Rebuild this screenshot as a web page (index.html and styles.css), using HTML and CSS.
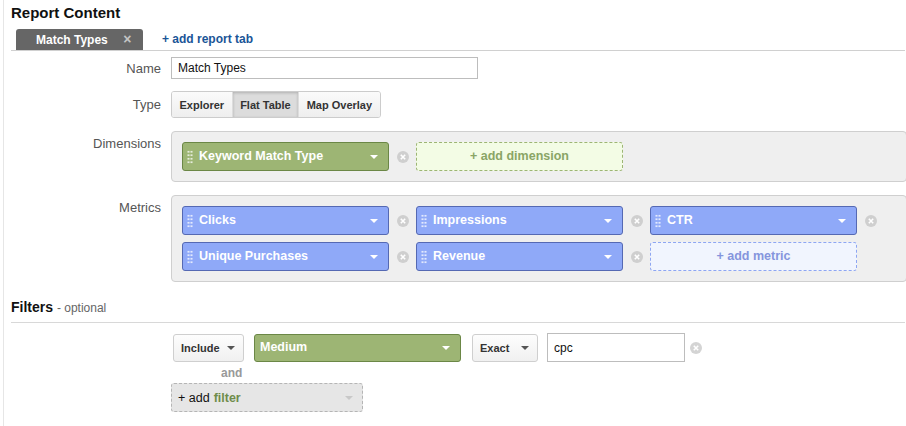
FILE: index.html
```html
<!DOCTYPE html>
<html lang="en">
<head>
    <meta charset="UTF-8">
    <title>Report Content</title>
    <link rel="stylesheet" href="styles.css">
</head>
<body>
    <div class="page">
        <h2 class="section-title">Report Content</h2>

        <div class="tabs">
            <div class="tab">Match Types <span class="tab-close">×</span></div>
            <a class="add-tab" href="#">+ add report tab</a>
        </div>

        <div class="row row-name">
            <label class="row-label">Name</label>
            <input class="text-input name-input" type="text" value="Match Types">
        </div>

        <div class="row row-type">
            <label class="row-label">Type</label>
            <div class="segmented">
                <button class="seg-btn">Explorer</button>
                <button class="seg-btn active">Flat Table</button>
                <button class="seg-btn">Map Overlay</button>
            </div>
        </div>

        <div class="row row-box">
            <label class="row-label top">Dimensions</label>
            <div class="field-box">
                <div class="item-grid">
                    <div class="item">
                        <div class="pill green"><span class="grip"></span><span class="pill-text">Keyword Match Type</span><span class="caret"></span></div>
                        <span class="remove"><svg width="12" height="12" viewBox="0 0 12 12"><circle cx="6" cy="6" r="6" fill="#cfcfcf"/><path d="M3.8 3.8l4.4 4.4M8.2 3.8l-4.4 4.4" stroke="#fff" stroke-width="1.6"/></svg></span>
                    </div>
                    <div class="item">
                        <div class="add-box green-add">+ add dimension</div>
                    </div>
                </div>
            </div>
        </div>

        <div class="row row-box">
            <label class="row-label top">Metrics</label>
            <div class="field-box">
                <div class="item-grid">
                    <div class="item">
                        <div class="pill blue"><span class="grip"></span><span class="pill-text">Clicks</span><span class="caret"></span></div>
                        <span class="remove"><svg width="12" height="12" viewBox="0 0 12 12"><circle cx="6" cy="6" r="6" fill="#cfcfcf"/><path d="M3.8 3.8l4.4 4.4M8.2 3.8l-4.4 4.4" stroke="#fff" stroke-width="1.6"/></svg></span>
                    </div>
                    <div class="item">
                        <div class="pill blue"><span class="grip"></span><span class="pill-text">Impressions</span><span class="caret"></span></div>
                        <span class="remove"><svg width="12" height="12" viewBox="0 0 12 12"><circle cx="6" cy="6" r="6" fill="#cfcfcf"/><path d="M3.8 3.8l4.4 4.4M8.2 3.8l-4.4 4.4" stroke="#fff" stroke-width="1.6"/></svg></span>
                    </div>
                    <div class="item">
                        <div class="pill blue"><span class="grip"></span><span class="pill-text">CTR</span><span class="caret"></span></div>
                        <span class="remove"><svg width="12" height="12" viewBox="0 0 12 12"><circle cx="6" cy="6" r="6" fill="#cfcfcf"/><path d="M3.8 3.8l4.4 4.4M8.2 3.8l-4.4 4.4" stroke="#fff" stroke-width="1.6"/></svg></span>
                    </div>
                    <div class="item">
                        <div class="pill blue"><span class="grip"></span><span class="pill-text">Unique Purchases</span><span class="caret"></span></div>
                        <span class="remove"><svg width="12" height="12" viewBox="0 0 12 12"><circle cx="6" cy="6" r="6" fill="#cfcfcf"/><path d="M3.8 3.8l4.4 4.4M8.2 3.8l-4.4 4.4" stroke="#fff" stroke-width="1.6"/></svg></span>
                    </div>
                    <div class="item">
                        <div class="pill blue"><span class="grip"></span><span class="pill-text">Revenue</span><span class="caret"></span></div>
                        <span class="remove"><svg width="12" height="12" viewBox="0 0 12 12"><circle cx="6" cy="6" r="6" fill="#cfcfcf"/><path d="M3.8 3.8l4.4 4.4M8.2 3.8l-4.4 4.4" stroke="#fff" stroke-width="1.6"/></svg></span>
                    </div>
                    <div class="item">
                        <div class="add-box blue-add">+ add metric</div>
                    </div>
                </div>
            </div>
        </div>

        <h2 class="section-title filters-title">Filters <span class="optional">- optional</span></h2>

        <div class="filters">
            <div class="filter-row">
                <button class="select-btn include-btn"><span>Include</span><span class="caret dark"></span></button>
                <div class="pill green medium-pill"><span class="pill-text">Medium</span><span class="caret"></span></div>
                <button class="select-btn exact-btn"><span>Exact</span><span class="caret dark"></span></button>
                <input class="text-input cpc-input" type="text" value="cpc">
                <span class="remove"><svg width="12" height="12" viewBox="0 0 12 12"><circle cx="6" cy="6" r="6" fill="#d4d4d4"/><path d="M3.8 3.8l4.4 4.4M8.2 3.8l-4.4 4.4" stroke="#fff" stroke-width="1.6"/></svg></span>
            </div>
            <div class="and-label">and</div>
            <div class="add-filter">+ add <span class="filter-word">filter</span><span class="caret light"></span></div>
        </div>
    </div>
</body>
</html>
```

FILE: styles.css
```css
body {
    margin: 0;
    padding: 0;
    font-family: 'Liberation Sans', Arial, sans-serif;
    font-size: 13px;
    color: #222;
    background: white;
}

.page {
    margin-left: 3px;
    padding-left: 7px;
    padding-right: 1px;
    border-left: 1px solid #e6e6e6;
    min-height: 426px;
    box-sizing: border-box;
}

.section-title {
    margin: 0;
    padding-top: 3px;
    font-size: 15px;
    line-height: 20px;
    font-weight: bold;
    color: #111;
}

/* tabs */
.tabs {
    display: flex;
    align-items: flex-end;
    margin-top: 6px;
    padding-left: 5px;
    border-bottom: 1px solid #d0d0d0;
}

.tab {
    width: 127px;
    height: 21px;
    box-sizing: border-box;
    padding-left: 20px;
    background: #666;
    color: white;
    font-weight: bold;
    font-size: 12px;
    line-height: 21px;
    border-radius: 3px 3px 0 0;
}

.tab-close {
    margin-left: 12px;
    color: #c4c4c4;
    font-size: 14px;
}

.add-tab {
    margin-left: 19px;
    line-height: 21px;
    font-size: 12px;
    font-weight: bold;
    color: #1a5597;
    text-decoration: none;
}

/* form rows */
.row {
    display: grid;
    grid-template-columns: 150px 1fr;
    column-gap: 10px;
    align-items: center;
}

.row-label {
    text-align: right;
    color: #555;
    font-size: 13px;
}

.row-label.top {
    align-self: start;
    padding-top: 5px;
}

.row-name {
    margin-top: 6px;
}

.row-type {
    margin-top: 12px;
}

.row-box {
    margin-top: 13px;
}

.text-input {
    box-sizing: border-box;
    height: 22px;
    border: 1px solid #bdbdbd;
    padding: 0 6px;
    font-family: 'Liberation Sans', Arial, sans-serif;
    font-size: 12px;
    color: #111;
    outline: none;
}

.name-input {
    width: 307px;
}

.segmented {
    display: flex;
    width: max-content;
    height: 27px;
    border: 1px solid #ccc;
    border-radius: 3px;
    box-sizing: border-box;
    overflow: hidden;
}

.seg-btn {
    border: none;
    border-right: 1px solid #ddd;
    padding: 0 7.5px;
    background: linear-gradient(#fbfbfb, #eeeeee);
    font-family: 'Liberation Sans', Arial, sans-serif;
    font-weight: bold;
    font-size: 11px;
    color: #333;
}

.seg-btn:last-child {
    border-right: none;
}

.seg-btn.active {
    background: #dcdcdc;
    box-shadow: inset 0 1px 3px rgba(0,0,0,0.2);
}

/* dimension / metric boxes */
.field-box {
    border: 1px solid #cfcfcf;
    border-radius: 4px;
    background: #efefef;
    padding: 10px 0 10px 10px;
    margin-right: -2px;
}

.item-grid {
    display: grid;
    grid-template-columns: repeat(3, 234px);
    row-gap: 7px;
}

.item {
    display: flex;
    align-items: center;
}

.pill {
    display: flex;
    align-items: center;
    box-sizing: border-box;
    width: 207px;
    height: 29px;
    padding: 0 10px 0 4px;
    border-radius: 3px;
    color: white;
    font-weight: bold;
    font-size: 12.5px;
}

.pill.green {
    background: #9db574;
    border: 1px solid #6b8746;
}

.pill.blue {
    background: #8fa9f8;
    border: 1px solid #5569b3;
}

.grip {
    width: 6px;
    height: 14px;
    margin-right: 6px;
    background-image: radial-gradient(circle, rgba(255,255,255,0.75) 0.9px, transparent 1.3px);
    background-size: 3px 3.5px;
    flex-shrink: 0;
}

.pill-text {
    flex: 1;
    margin-top: -2px;
}

.caret {
    width: 0;
    height: 0;
    border-left: 4px solid transparent;
    border-right: 4px solid transparent;
    border-top: 4px solid white;
}

.caret.dark {
    border-top-color: #555;
}

.caret.light {
    margin-left: auto;
    border-top-color: #c8c8c8;
}

.remove {
    display: flex;
    justify-content: center;
    width: 27px;
}

.add-box {
    box-sizing: border-box;
    width: 207px;
    height: 29px;
    line-height: 26px;
    border-radius: 3px;
    text-align: center;
    font-weight: bold;
    font-size: 12.5px;
}

.green-add {
    background: #f3fce5;
    border: 1px dashed #9db574;
    color: #8aa566;
}

.blue-add {
    background: #f1f5fe;
    border: 1px dashed #8ea6f2;
    color: #8595dd;
}

/* filters */
.filters-title {
    margin-top: 12px;
    padding-bottom: 4px;
    border-bottom: 1px solid #d8d8d8;
    font-size: 14px;
}

.optional {
    font-weight: normal;
    font-size: 12px;
    color: #666;
}

.filters {
    padding-left: 160px;
    padding-top: 10px;
}

.filter-row {
    display: flex;
    align-items: center;
}

.select-btn {
    display: flex;
    align-items: center;
    justify-content: space-between;
    white-space: nowrap;
    box-sizing: border-box;
    height: 28px;
    border: 1px solid #cfcfcf;
    border-radius: 3px;
    background: linear-gradient(#fdfdfd, #f0f0f0);
    font-family: 'Liberation Sans', Arial, sans-serif;
    font-weight: bold;
    font-size: 11px;
    color: #333;
    padding: 0 8px 0 7px;
}

.include-btn {
    width: 71px;
    margin-left: 2px;
}

.medium-pill {
    width: 207px;
    height: 28px;
    margin-left: 10px;
    padding-left: 5px;
}

.exact-btn {
    width: 66px;
    margin-left: 11px;
}

.cpc-input {
    width: 138px;
    height: 29px;
    margin-left: 9px;
    font-size: 12px;
}

.cpc-input + .remove {
    width: 22px;
}

.and-label {
    margin: 4px 0 0 50px;
    font-weight: bold;
    font-size: 12px;
    color: #999;
}

.add-filter {
    display: flex;
    align-items: center;
    box-sizing: border-box;
    width: 192px;
    height: 29px;
    margin-top: 3px;
    padding: 0 9px 0 6px;
    background: #e6e6e6;
    border: 1px dashed #b5b5b5;
    border-radius: 3px;
    font-size: 12.5px;
    color: #111;
}

.filter-word {
    margin-left: 4px;
    font-weight: bold;
    color: #6f8c4b;
}
```
